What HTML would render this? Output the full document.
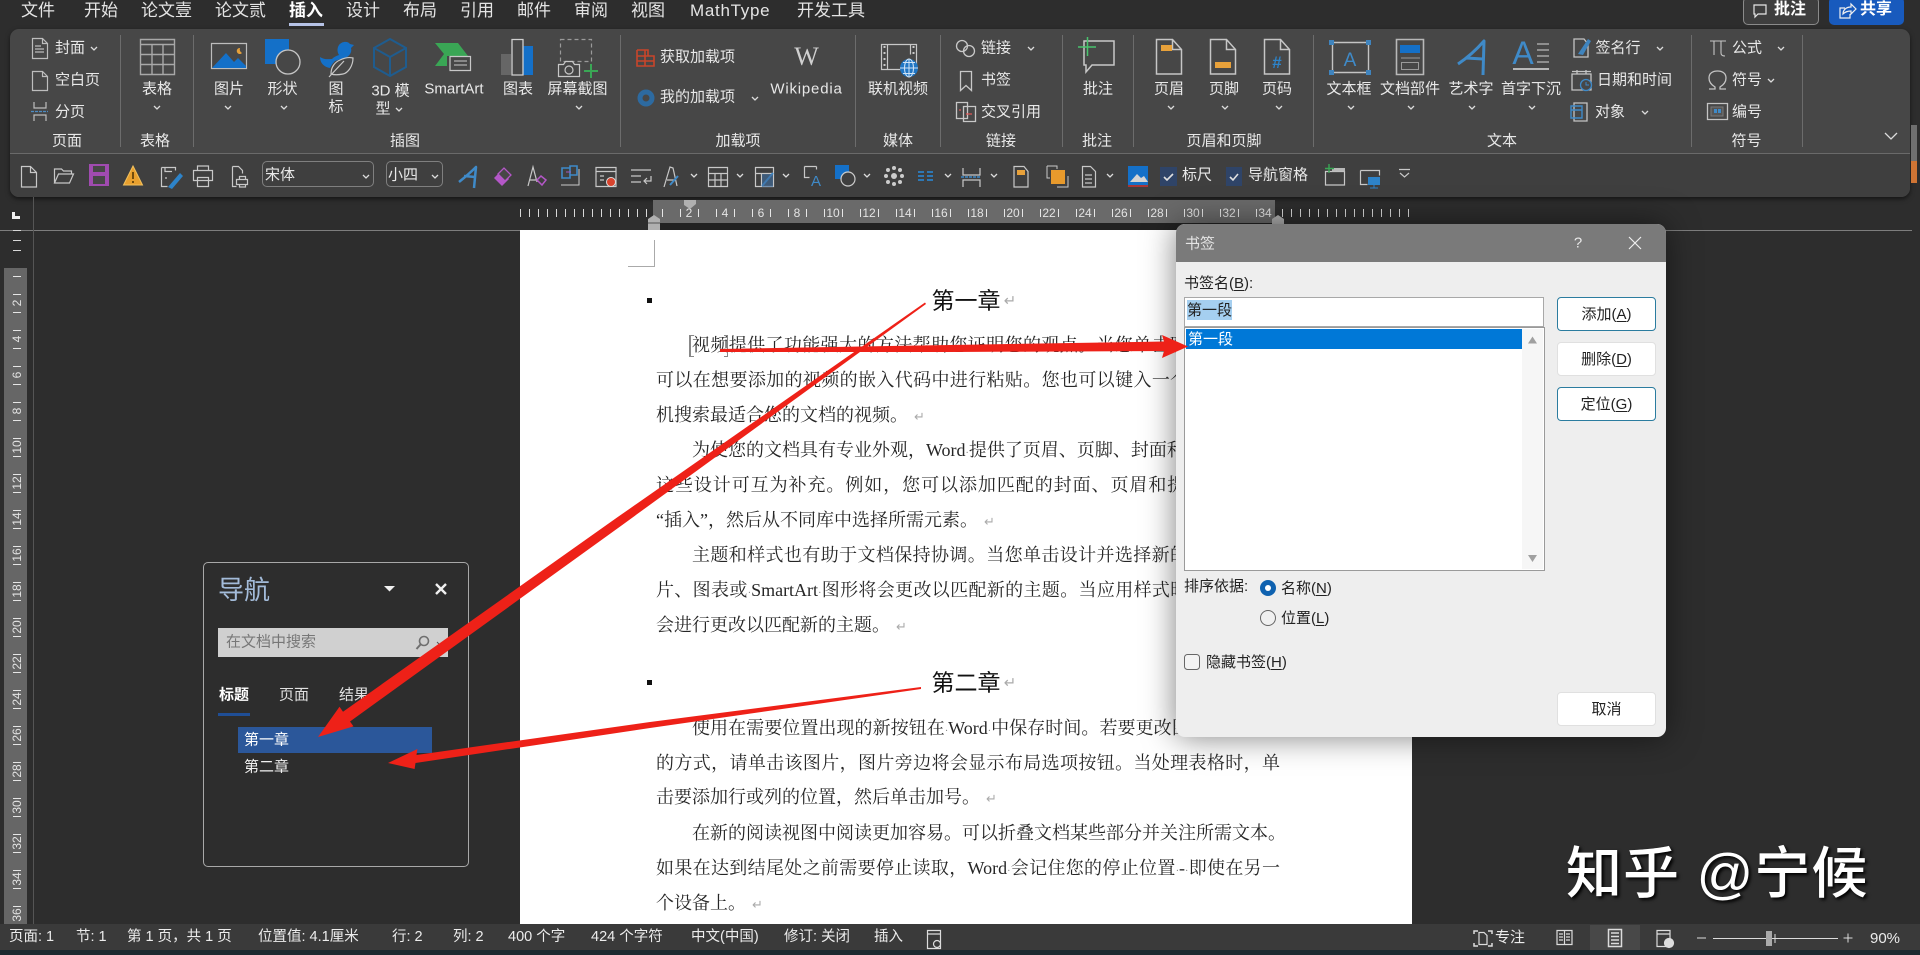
<!DOCTYPE html>
<html lang="zh-CN">
<head>
<meta charset="utf-8">
<title>书签</title>
<style>
html,body{margin:0;padding:0;width:1920px;height:955px;overflow:hidden;background:#2d2d2d}
body{position:relative;font-family:"Liberation Sans","Noto Sans CJK SC",sans-serif;color:#e8e8e8;font-size:15px}
div,span{box-sizing:border-box}
.a{position:absolute}
.c,.l,.tab,.s,.d{position:absolute;white-space:nowrap;line-height:1}
.c{transform:translate(-50%,-50%)}
.l{transform:translateY(-50%)}
.tab{top:2px;font-size:17px;color:#e4e4e4}
.s{top:930px;font-size:14.5px;color:#ececec}
svg{position:absolute;left:0;top:0}
.ln{position:absolute;left:656px;width:624px;height:24px;line-height:24px;font-family:"Liberation Serif","Noto Serif CJK SC",serif;font-size:18px;color:#262626;white-space:nowrap;text-align:justify;text-align-last:justify}
.ln.i{left:692px;width:588px}
.ln.e{text-align-last:left}
.ln b{font-weight:400;color:#888;font-size:10px}
.r{font-family:"DejaVu Sans",sans-serif;color:#aaa;font-size:13px;margin-left:6px}
.d{font-size:15px;color:#222}
.btn{position:absolute;left:1557px;width:99px;height:34px;background:#fff;border:1px solid #e0e0e0;border-radius:4px;text-align:center;line-height:34px;font-size:15px;color:#222}
.btn.p{border:1.5px solid #2b7c9f}
u{text-underline-offset:2px}
</style>
</head>
<body>
<!-- top tabs -->
<div class="tab" style="left:21px">文件</div>
<div class="tab" style="left:84px">开始</div>
<div class="tab" style="left:141px">论文壹</div>
<div class="tab" style="left:215px">论文贰</div>
<div class="tab" style="left:289px;font-weight:700;color:#fff">插入</div>
<div class="a" style="left:289px;top:23px;width:35px;height:3px;background:#b6c3e6"></div>
<div class="tab" style="left:346px">设计</div>
<div class="tab" style="left:403px">布局</div>
<div class="tab" style="left:460px">引用</div>
<div class="tab" style="left:517px">邮件</div>
<div class="tab" style="left:574px">审阅</div>
<div class="tab" style="left:631px">视图</div>
<div class="tab" style="left:690px;letter-spacing:.7px">MathType</div>
<div class="tab" style="left:797px">开发工具</div>

<div class="a" style="left:1743px;top:-3px;width:76px;height:28px;background:#3e3e3e;border:1px solid #8a8a8a;border-radius:5px"></div>
<div class="c" style="left:1790px;top:10px;font-size:16px;font-weight:700;color:#fff">批注</div>
<div class="a" style="left:1829px;top:-3px;width:75px;height:28px;background:#185abd;border-radius:5px"></div>
<div class="c" style="left:1876px;top:10px;font-size:16px;font-weight:700;color:#fff">共享</div>

<!-- ribbon -->
<div class="a" style="left:10px;top:29px;width:1900px;height:168px;background:#474747;border-radius:9px;box-shadow:0 2px 5px rgba(0,0,0,.55);overflow:hidden">
  <div class="a" style="left:0;top:124px;width:1900px;height:44px;background:#3f3f3f;border-top:1px solid #6a6a6a"></div>
</div>

<!-- rulers / page background -->
<div class="a" style="left:653px;top:200px;width:622px;height:23px;background:#6a6a6a"></div>
<div class="a" style="left:653px;top:223px;width:622px;height:7px;background:#222"></div>
<div class="a" style="left:4px;top:268px;width:23px;height:656px;background:#666"></div>
<div class="a" style="left:0;top:230px;width:1912px;height:1px;background:#7d7d7d"></div>
<div class="a" style="left:33px;top:197px;width:1px;height:727px;background:#555"></div>
<div class="a" style="left:520px;top:230px;width:892px;height:694px;background:#fff"></div>

<!-- document -->
<div class="a" style="left:647px;top:298px;width:5px;height:5px;background:#111"></div>
<div class="a" style="left:647px;top:680px;width:5px;height:5px;background:#111"></div>
<div class="c" style="left:966px;top:301px;font-size:23px;color:#111">第一章</div>
<div class="c" style="left:1010px;top:301px;font-size:15px;color:#aaa;font-family:'DejaVu Sans',sans-serif">↵</div>
<div class="c" style="left:966px;top:683px;font-size:23px;color:#111">第二章</div>
<div class="c" style="left:1010px;top:683px;font-size:15px;color:#aaa;font-family:'DejaVu Sans',sans-serif">↵</div>
<div class="a" style="left:628px;top:266px;width:27px;height:1px;background:#aaa"></div>
<div class="a" style="left:654px;top:240px;width:1px;height:27px;background:#aaa"></div>

<div class="ln i" style="top:333px">视频提供了功能强大的方法帮助您证明您的观点。当您单击联机视频时，</div>
<div class="ln" style="top:368px">可以在想要添加的视频的嵌入代码中进行粘贴。您也可以键入一个关键字以联</div>
<div class="ln e" style="top:403px">机搜索最适合您的文档的视频。<span class="r">↵</span></div>
<div class="ln i" style="top:438px">为使您的文档具有专业外观，Word<b>·</b>提供了页眉、页脚、封面和文本框设计，</div>
<div class="ln" style="top:473px">这些设计可互为补充。例如，您可以添加匹配的封面、页眉和提要栏。单击</div>
<div class="ln e" style="top:508px">“插入”，然后从不同库中选择所需元素。<span class="r">↵</span></div>
<div class="ln i" style="top:543px">主题和样式也有助于文档保持协调。当您单击设计并选择新的主题时，图</div>
<div class="ln" style="top:578px">片、图表或<b>·</b>SmartArt<b>·</b>图形将会更改以匹配新的主题。当应用样式时，您的标题</div>
<div class="ln e" style="top:613px">会进行更改以匹配新的主题。<span class="r">↵</span></div>
<div class="ln i" style="top:716px">使用在需要位置出现的新按钮在<b>·</b>Word<b>·</b>中保存时间。若要更改图片适应文档</div>
<div class="ln" style="top:751px">的方式，请单击该图片，图片旁边将会显示布局选项按钮。当处理表格时，单</div>
<div class="ln e" style="top:785px">击要添加行或列的位置，然后单击加号。<span class="r">↵</span></div>
<div class="ln i" style="top:821px">在新的阅读视图中阅读更加容易。可以折叠文档某些部分并关注所需文本。</div>
<div class="ln" style="top:856px">如果在达到结尾处之前需要停止读取，Word<b>·</b>会记住您的停止位置<b>·</b>-<b>·</b>即使在另一</div>
<div class="ln e" style="top:891px">个设备上。<span class="r">↵</span></div>
<div class="a" style="left:689px;top:335px;width:5px;height:22px;border:1px solid #888;border-left-width:2px;border-right:0"></div>
<div class="a" style="left:724px;top:335px;width:4px;height:22px;border:1px solid #888;border-left:0"></div>

<!-- ribbon icons, rulers -->
<svg width="1920" height="955" viewBox="0 0 1920 955" fill="none">
  <!-- group separators -->
  <path stroke="#6c6c6c" d="M120.500 35v112M193.500 35v112M620.500 35v112M855.500 35v112M940.500 35v112M1062.500 35v112M1133.500 35v112M1313.500 35v112M1691.500 35v112M1802.500 35v112"/>
  <!-- chevrons -->
  <path stroke="#dcdcdc" stroke-width="1.3" d="M91 47l3 3 3-3M154 106l3 3 3-3M225 106l3 3 3-3M281 106l3 3 3-3M396 108l3 3 3-3M576 106l3 3 3-3M752 97l3 3 3-3M1028 47l3 3 3-3M1168 106l3 3 3-3M1222 106l3 3 3-3M1276 106l3 3 3-3M1348 106l3 3 3-3M1408 106l3 3 3-3M1469 106l3 3 3-3M1529 106l3 3 3-3M1657 47l3 3 3-3M1642 111l3 3 3-3M1778 47l3 3 3-3M1768 79l3 3 3-3M363 175l3 3 3-3M432 175l3 3 3-3M691 174l3 3 3-3M737 174l3 3 3-3M783 174l3 3 3-3M864 174l3 3 3-3M945 174l3 3 3-3M991 174l3 3 3-3M1107 174l3 3 3-3"/>
  <path stroke="#dcdcdc" stroke-width="1.3" d="M1885 133l6 6 6-6"/>
  <!-- page group -->
  <g stroke="#bdbdbd" stroke-width="1.2">
    <path d="M32.500 38.500h10l5 5v15h-15zM42.500 38.500v5h5M35 46h6M35 49h9M35 52h9"/>
    <path d="M32.500 71.500h10l5 5v14h-15zM42.500 71.500v5h5"/>
    <path d="M34 102v6h12v-6M34 121v-6h12v6"/>
    <path stroke="#4d8cc4" stroke-dasharray="3 1" d="M31 111.500h17"/>
    <!-- table -->
    <path stroke="#a8a8a8" stroke-width="1.4" d="M140.500 39.500h34v35h-34zM140.500 44.500h34M140.500 54.500h34M140.500 64.500h34M152 44.500v30M163 44.500v30"/>
    <!-- picture -->
    <path d="M211.500 43.500h35v25h-35z"/>
  </g>
  <path fill="#1470c8" d="M212 68l14-15 8 9 4-4 8 8v2z"/>
  <path fill="#e6a13a" d="M240 48a3 3 0 1 0 2 5 4 4 0 0 1-2-5z"/>
  <!-- shapes -->
  <path fill="#1470c8" d="M265 39h24v25h-24z"/>
  <circle cx="288" cy="62" r="12" fill="#474747" stroke="#c6c6c6" stroke-width="1.3"/>
  <!-- icon duck + leaf -->
  <path fill="#1470c8" d="M320 57c5 3 8 2 12 2 2-2 4-3 7-4-2-3-2-7 0-10 3-4 9-4 11-1l4 1-3 3c1 4-1 7-4 9l-12 4c-3 3-4 5-5 7-6-1-10-5-10-11z"/>
  <path fill="#474747" stroke="#c8c8c8" stroke-width="1.2" d="M331 74c0-7 4-12 9-14 4-2 9-3 13-2 0 8-5 15-10 16-5 1-9 1-12 0zM329 77l15-16"/>
  <!-- 3D -->
  <path stroke="#1f5c8e" stroke-width="2" d="M390 39l16 9v19l-16 9-16-9V48zM374 48l16 9 16-9M390 57v19"/>
  <!-- smartart -->
  <path fill="#3aa655" d="M435 43h23l10 13h-21v10h-12l9-12z"/>
  <path fill="#474747" stroke="#c8c8c8" stroke-width="1.2" d="M450 56.500h20.500v14h-20.500z"/>
  <path stroke="#c8c8c8" d="M454 61h13M454 65h13"/>
  <!-- chart -->
  <path fill="#666" d="M501 54h10v21h-10z"/>
  <path fill="#1470c8" d="M523 46h10v29h-10z"/>
  <path stroke="#d0d0d0" stroke-width="1.3" d="M512 39.500h11v35.500h-11z"/>
  <!-- screenshot -->
  <path stroke="#9a9a9a" stroke-width="1.2" stroke-dasharray="4 3" d="M560.500 39.500h31v22h-31z"/>
  <path stroke="#c8c8c8" stroke-width="1.2" fill="#474747" d="M558.500 64.500h5l2-3h7l2 3h5v12h-21z"/>
  <circle cx="569" cy="70" r="4" stroke="#c8c8c8" stroke-width="1.2"/>
  <path stroke="#3aa655" stroke-width="2" d="M591 64v14M584 71h14"/>
  <!-- addins -->
  <path stroke="#c8452a" stroke-width="1.6" d="M637 50h11v6h6M637 56h17v10h-17zM637 50v6M645 50v16M637 61h17"/>
  <circle cx="646" cy="98" r="6" stroke="#2d6aa0" stroke-width="5"/>
  <!-- video -->
  <path stroke="#c8c8c8" stroke-width="1.2" d="M881.500 44.500h35v25h-35zM887.500 44.500v25M910.500 44.500v10"/>
  <path stroke="#c8c8c8" stroke-width="2" stroke-dasharray="2 4" d="M884.500 46v22M913.500 46v8"/>
  <circle cx="909" cy="68" r="9" fill="#2076c4"/>
  <path stroke="#cfe3f6" d="M900 68h18M909 59v18M903 62.500h12M903 73.500h12"/>
  <ellipse cx="909" cy="68" rx="4.500" ry="9" stroke="#cfe3f6"/>
  <!-- links -->
  <g stroke="#c8c8c8" stroke-width="1.3">
    <circle cx="962" cy="46" r="5.500"/><circle cx="969" cy="51" r="5.500"/>
    <path d="M960.500 71.500h11v19l-5.500-5-5.500 5z"/>
    <path d="M956.500 102.500h11v16h-11zM963.500 106.500h12v15h-12z"/>
    <path stroke="#d55" d="M966 114h6M959 110h2"/>
    <!-- comment -->
    <path stroke-width="1.5" d="M1084 41h30v24h-22l-6 7v-7h-2z"/>
  </g>
  <path stroke="#49c46e" stroke-width="1.5" d="M1087.500 37v19M1078 47h18"/>
  <!-- header/footer docs -->
  <g stroke="#c6c6c6" stroke-width="1.5">
    <path d="M1156.500 39.500h16l9 10v24.500h-25zM1172.500 39.500v10h9"/>
    <path d="M1210.500 39.500h16l9 10v24.500h-25zM1226.500 39.500v10h9"/>
    <path d="M1264.500 39.500h16l9 10v24.500h-25zM1280.500 39.500v10h9"/>
  </g>
  <path fill="#e8a13a" d="M1161 45h11v6h-11zM1215 62h16v6h-16z"/>
  <text x="1277" y="68" font-family="Liberation Sans" font-size="17" font-weight="700" fill="#2d83c9" text-anchor="middle">#</text>
  <!-- textbox -->
  <path stroke="#c4c4c4" stroke-width="1.4" d="M1332.500 42.500h36v30h-36z"/>
  <path fill="#3f84be" d="M1329 40h5v5h-5zM1366 40h5v5h-5zM1329 70h5v5h-5zM1366 70h5v5h-5z"/>
  <text x="1350" y="66" font-family="Liberation Sans" font-size="19" fill="#3f8ac8" text-anchor="middle">A</text>
  <!-- doc parts -->
  <path stroke="#b8b8b8" stroke-width="1.6" d="M1396.500 39.500h27v35h-27z"/>
  <path fill="#1470c8" d="M1400 45h20v8h-20z"/>
  <path stroke="#9a9a9a" d="M1401 58h19M1401.500 62.500h17v7h-17z"/>
  <!-- wordart -->
  <path stroke="#3f8ac8" stroke-width="3" stroke-linejoin="round" d="M1458 64c9-6 19-15 26-23l-1 34M1466 58l17 1"/>
  <!-- dropcap -->
  <text x="1523" y="64" font-family="Liberation Sans" font-size="32" fill="#3f8ac8" text-anchor="middle">A</text>
  <path stroke="#b8b8b8" stroke-width="1.3" d="M1537 44h12M1537 50h12M1537 56h12M1537 62h12"/>
  <path stroke="#b8b8b8" stroke-width="2" d="M1513 69h36"/>
  <!-- signature etc -->
  <g stroke="#c4c4c4" stroke-width="1.3">
    <path d="M1574 39h10l4 5v13h-14z"/>
    <path d="M1572 74h19v16h-19zM1572 71.500h19M1577 70v4M1586 70v4"/>
    <path d="M1574 103h13v18h-13z"/>
    <path stroke-width="1.1" d="M1726 41h-16M1714 41v14M1721 41v12c0 2 1 3 4 3"/>
    <path stroke-width="1.3" d="M1709 89h6v-2c-5-3-6-6-6-9 0-5 4-7 8.500-7s8.500 2 8.500 7c0 3-1 6-6 9v2h6"/>
    <path d="M1707.500 103.500h20v16h-20z"/>
  </g>
  <path fill="#3f84be" d="M1578 54l10-15 3 2-8 14z"/>
  <path fill="#555" stroke="#7a7a7a" d="M1711 107h12v9h-12z"/>
  <path fill="#3f8ac8" d="M1714 109h3v4h-3zM1718 109h3v4h-3z"/>
  <circle cx="1586" cy="85" r="5.500" fill="#474747" stroke="#3f8ac8" stroke-width="1.3"/>
  <path stroke="#3f8ac8" d="M1586 82v3h3"/>
  <path stroke="#3f8ac8" stroke-width="1.4" d="M1571 106h11v12h-11zM1571 110h11"/>

  <!-- toolbar icons -->
  <g stroke="#c8c8c8" stroke-width="1.2">
    <path d="M21.500 166.500h9l6 6v14.500h-15zM30.500 166.500v6h6"/>
    <path d="M54.500 183v-14h7l2 2h8v3M54.500 183l4-9h15l-4 9z"/>
    <path d="M161.500 167.500h14v3M161.500 167.500v19h6M165 167.500v4h7M165 178h2"/>
    <path d="M197.500 170v-4h11v4M193.500 170.500h19v10h-19zM197.500 177.500h11v9h-11z"/>
    <path d="M232.500 166.500h6l4 4v3M232.500 166.500v20h4M239.500 176.500h6v3h-6zM236.500 179.500h11v5h-11zM239.500 184.500h6v2.500h-6z"/>
    <path d="M596 167.500h20v19h-20zM596 171.500h20M600 176h4M600 180h4"/>
    <path d="M631 170h20M631 176h10M631 182h10M651 176v5h-7M647 178l-3 3 3 3"/>
    <path d="M664 187l6-20 3 1 4 18M667 180h8"/>
    <path d="M708.500 167.500h19v19h-19zM708.500 173.500h19M708.500 180h19M715 173.500v13M721 173.500v13"/>
    <path d="M755.500 167.500h18v19h-18zM755.500 173.500h18M761.500 173.500v13"/>
    <path d="M804.500 166.500h12M804.500 166.500v11h5M816.500 166.500v3"/>
    <path d="M1014 166.500h10l4 5v15.500h-14z"/>
    <path d="M1082.500 166.500h8l5 5v15.500h-13zM1085 175h7M1085 179h7M1085 183h7"/>
    <path d="M963 168v7h17v-7M963 187v-7h17v7"/>
    <path d="M1325.500 171.500h19v13.500h-19z"/>
    <path d="M1360.500 170.500h19v5M1360.500 170.500v14h7"/>
    <path d="M1399 169.500h11M1400 173l4.500 4 4.500-4"/>
  </g>
  <path fill="#b8b8b8" d="M1332 168h13v3.500h-13z"/>
  <path fill="#a04bb0" d="M89 164h20v22h-20z"/>
  <path fill="#474747" d="M93 166h12v6h-12zM93 176h12v8h-12z"/>
  <path fill="#e8a02e" stroke="#f2c15e" d="M133 166l9.500 19h-19z"/>
  <path stroke="#4a3000" stroke-width="1.5" d="M133 172v7M133 181v2"/>
  <path fill="#2d83c9" d="M168 187l12-14 3 3-11 13z"/>
  <path stroke="#3f8ac8" stroke-width="2.500" stroke-linejoin="round" d="M459 182c5-4 12-10 17-15l-2 21M464 176l11 1"/>
  <path fill="#b457c8" d="M494 178l8 8 7-7-8-8z"/>
  <path stroke="#b457c8" stroke-width="1.300" fill="#474747" d="M498 174l6-6 7 7-6 6z"/>
  <path stroke="#c8c8c8" stroke-width="1.2" d="M528 186l5-19 4 15M530 180h6"/>
  <path stroke="#b457c8" stroke-width="1.500" d="M537 180l4-4 5 4-4 5z"/>
  <path stroke="#3f8ac8" stroke-width="1.600" d="M562 168h8v10h-8zM570 166h7v9h-7z"/>
  <path stroke="#a05abf" d="M566 172h5"/>
  <path stroke="#c8c8c8" d="M561 185h18v-16"/>
  <circle cx="611" cy="182" r="4.500" fill="#d8432d" stroke="#ddd"/>
  <path stroke="#3f8ac8" stroke-width="2" d="M670 185l8-9"/>
  <path stroke="#3f8ac8" stroke-width="2" d="M762 186l11-13"/>
  <path fill="#3f6ea0" opacity=".6" d="M762 174h11v13h-11z"/>
  <text x="816" y="186" font-family="Liberation Sans" font-size="15" fill="#3f8ac8" text-anchor="middle">A</text>
  <path fill="#1470c8" d="M835 165h14v14h-14z"/>
  <circle cx="848" cy="179" r="7" fill="#3f3f3f" stroke="#ccc" stroke-width="1.200"/>
  <g fill="#ccc">
    <circle cx="894" cy="176" r="3"/><circle cx="894" cy="168" r="2"/><circle cx="894" cy="184" r="2"/><circle cx="886" cy="176" r="2"/><circle cx="902" cy="176" r="2"/><circle cx="888" cy="170" r="2"/><circle cx="900" cy="170" r="2"/><circle cx="888" cy="182" r="2"/><circle cx="900" cy="182" r="2"/>
  </g>
  <path stroke="#2e78b5" stroke-width="2" d="M918 172h6M918 176h6M918 180h6M927 172h6M927 176h6M927 180h6"/>
  <path stroke="#3f8ac8" stroke-width="1.500" stroke-dasharray="3 1" d="M961 177h20"/>
  <path fill="#e8a13a" d="M1017 170h8v5h-8z"/>
  <path stroke="#c8c8c8" d="M1047 166h10v3M1047 166v12h3M1068 176v11h-11"/>
  <path fill="#e89a2c" d="M1051 170h14v14h-14z"/>
  <path fill="#1470c8" d="M1128 166h20v19h-20z"/>
  <path fill="#d4d4d4" d="M1130 182l7-8 4 4 3-2 4 6z"/>
  <path stroke="#c33" stroke-width="1.500" d="M1128 186h20"/>
  <path fill="#2f4468" d="M1160 167h17v19h-17zM1226 167h16v19h-16z"/>
  <path stroke="#e0e0e0" stroke-width="1.600" d="M1164 177l3 3 6-6M1230 177l3 3 5-6"/>
  <path stroke="#3aa655" stroke-width="1.400" d="M1329 164v9M1325 168.500h9"/>
  <path fill="#2d83c9" d="M1368 177h12v8h-12z"/>
  <path stroke="#2d83c9" d="M1374 185v3M1370 188h8"/>

  <!-- comment/share top icons -->
  <path stroke="#e6e6e6" stroke-width="1.200" d="M1754 5h12v9h-8l-3 3v-3h-1z"/>
  <path stroke="#f0f0f0" stroke-width="1.200" d="M1845 8h-5v10h10v-4M1843 14c0-4 3-7 8-7V4l5 5-5 5v-3c-3 0-6 1-8 3z"/>

  <!-- horizontal ruler ticks -->
  <path stroke="#d8d8d8" stroke-dasharray="1 8" stroke-width="8" d="M520 213h133M1282 213h128"/>
  <path stroke="#e6e6e6" stroke-dasharray="1 17" stroke-width="8" d="M662 213h610"/>
  <g font-family="Liberation Sans" font-size="12" fill="#e4e4e4" text-anchor="middle">
    <text x="689" y="217">2</text><text x="725" y="217">4</text><text x="761" y="217">6</text><text x="797" y="217">8</text><text x="833" y="217">10</text><text x="869" y="217">12</text><text x="905" y="217">14</text><text x="941" y="217">16</text><text x="977" y="217">18</text><text x="1013" y="217">20</text><text x="1049" y="217">22</text><text x="1085" y="217">24</text><text x="1121" y="217">26</text><text x="1157" y="217">28</text><text x="1193" y="217">30</text><text x="1229" y="217">32</text><text x="1265" y="217">34</text>
  </g>
  <!-- indents -->
  <path fill="#b0b0b0" d="M684 200h12v4l-6 5-6-4z"/>
  <path fill="#b0b0b0" d="M648 230v-11l6-4 6 4v11z"/>
  <path stroke="#555" d="M648 223h12"/>
  <path fill="#b0b0b0" d="M1272 230v-11l6-4 6 4v11z"/>
  <!-- tab stop -->
  <path fill="#f0f0f0" d="M12 212h3v4h5v3h-8z"/>
  <!-- vertical ruler ticks -->
  <path stroke="#d8d8d8" stroke-dasharray="1 9" stroke-width="8" d="M17 230v30"/>
  <path stroke="#e6e6e6" stroke-dasharray="1 17" stroke-width="8" d="M17 276v648"/>
  <g font-family="Liberation Sans" font-size="12" fill="#e4e4e4" text-anchor="middle">
    <text transform="translate(21 303) rotate(-90)">2</text><text transform="translate(21 339) rotate(-90)">4</text><text transform="translate(21 375) rotate(-90)">6</text><text transform="translate(21 411) rotate(-90)">8</text><text transform="translate(21 447) rotate(-90)">10</text><text transform="translate(21 483) rotate(-90)">12</text><text transform="translate(21 519) rotate(-90)">14</text><text transform="translate(21 555) rotate(-90)">16</text><text transform="translate(21 591) rotate(-90)">18</text><text transform="translate(21 627) rotate(-90)">20</text><text transform="translate(21 663) rotate(-90)">22</text><text transform="translate(21 699) rotate(-90)">24</text><text transform="translate(21 735) rotate(-90)">26</text><text transform="translate(21 771) rotate(-90)">28</text><text transform="translate(21 807) rotate(-90)">30</text><text transform="translate(21 843) rotate(-90)">32</text><text transform="translate(21 879) rotate(-90)">34</text><text transform="translate(21 915) rotate(-90)">36</text>
  </g>
  <!-- scrollbar -->
  <path fill="#6f6f6f" d="M1911 125h6v36h-6z"/>
  <path fill="#cf7434" d="M1911 161h6v22h-6z"/>
</svg>

<!-- ribbon labels -->
<div class="l" style="left:55px;top:48px">封面</div>
<div class="l" style="left:55px;top:80px">空白页</div>
<div class="l" style="left:55px;top:112px">分页</div>
<div class="c" style="left:157px;top:89px">表格</div>
<div class="c" style="left:229px;top:89px">图片</div>
<div class="c" style="left:282.500px;top:89px">形状</div>
<div class="c" style="left:336px;top:89px">图</div>
<div class="c" style="left:336px;top:107px">标</div>
<div class="c" style="left:390.500px;top:91px">3D 模</div>
<div class="c" style="left:383px;top:109px">型</div>
<div class="c" style="left:454px;top:89px">SmartArt</div>
<div class="c" style="left:518px;top:89px">图表</div>
<div class="c" style="left:577.500px;top:89px">屏幕截图</div>
<div class="l" style="left:660px;top:57px">获取加载项</div>
<div class="l" style="left:660px;top:97px">我的加载项</div>
<div class="c" style="left:806.500px;top:57px;font-family:'Liberation Serif',serif;font-size:26px;color:#d0d0d0">W</div>
<div class="c" style="left:806.500px;top:89px;letter-spacing:.8px">Wikipedia</div>
<div class="c" style="left:898px;top:89px">联机视频</div>
<div class="l" style="left:981px;top:48px">链接</div>
<div class="l" style="left:981px;top:80px">书签</div>
<div class="l" style="left:981px;top:112px">交叉引用</div>
<div class="c" style="left:1098px;top:89px">批注</div>
<div class="c" style="left:1169px;top:89px">页眉</div>
<div class="c" style="left:1224px;top:89px">页脚</div>
<div class="c" style="left:1277px;top:89px">页码</div>
<div class="c" style="left:1349px;top:89px">文本框</div>
<div class="c" style="left:1410px;top:89px">文档部件</div>
<div class="c" style="left:1471px;top:89px">艺术字</div>
<div class="c" style="left:1531px;top:89px">首字下沉</div>
<div class="l" style="left:1595.500px;top:48px">签名行</div>
<div class="l" style="left:1597px;top:80px">日期和时间</div>
<div class="l" style="left:1595px;top:112px">对象</div>
<div class="l" style="left:1732px;top:48px">公式</div>
<div class="l" style="left:1732px;top:80px">符号</div>
<div class="l" style="left:1732px;top:112px">编号</div>
<div class="c" style="left:67px;top:141px">页面</div>
<div class="c" style="left:155px;top:141px">表格</div>
<div class="c" style="left:405px;top:141px">插图</div>
<div class="c" style="left:738px;top:141px">加载项</div>
<div class="c" style="left:898px;top:141px">媒体</div>
<div class="c" style="left:1001px;top:141px">链接</div>
<div class="c" style="left:1097px;top:141px">批注</div>
<div class="c" style="left:1224px;top:141px">页眉和页脚</div>
<div class="c" style="left:1502px;top:141px">文本</div>
<div class="c" style="left:1746.500px;top:141px">符号</div>
<!-- toolbar controls -->
<div class="a" style="left:262px;top:161px;width:112px;height:26px;border:1px solid #7f7f7f;border-radius:5px"></div>
<div class="l" style="left:265px;top:175px">宋体</div>
<div class="a" style="left:386px;top:161px;width:57px;height:26px;border:1px solid #7f7f7f;border-radius:5px"></div>
<div class="l" style="left:388px;top:175px">小四</div>
<div class="l" style="left:1182px;top:175px">标尺</div>
<div class="l" style="left:1248px;top:175px">导航窗格</div>

<!-- status bar -->
<div class="a" style="left:0;top:924px;width:1920px;height:26px;background:#3a3a3a"></div>
<div class="a" style="left:0;top:950px;width:1920px;height:5px;background:#1d2a30"></div>
<div class="a" style="left:1590px;top:925px;width:50px;height:25px;background:#484848"></div>
<div class="s" style="left:9px">页面: 1</div>
<div class="s" style="left:76px">节: 1</div>
<div class="s" style="left:127px">第 1 页，共 1 页</div>
<div class="s" style="left:258px">位置值: 4.1厘米</div>
<div class="s" style="left:392px">行: 2</div>
<div class="s" style="left:453px">列: 2</div>
<div class="s" style="left:508px">400 个字</div>
<div class="s" style="left:591px">424 个字符</div>
<div class="s" style="left:691px">中文(中国)</div>
<div class="s" style="left:784px">修订: 关闭</div>
<div class="s" style="left:874px">插入</div>
<div class="s" style="left:1495px;font-size:15px">专注</div>
<div class="s" style="left:1870px;font-size:15px;top:931px">90%</div>
<svg width="1920" height="955" viewBox="0 0 1920 955" fill="none">
  <g stroke="#dcdcdc" stroke-width="1.200">
    <path d="M927.500 930.500h13v18h-13zM927.500 934h13"/>
    <circle cx="937" cy="944" r="3.500" fill="#3a3a3a"/>
    <path stroke-width="1.500" d="M1474 934v-3h4M1474 943v3h4M1492 934v-3h-4M1492 943v3h-4"/>
    <path d="M1479 932.500h5l3 3v9h-8z"/>
    <path d="M1557 930.500h7.500v14h-7.500zM1564.500 930.500h7.500v14h-7.500zM1559 934h4M1559 937h4M1559 940h4M1566 934h4M1566 937h4M1566 940h4"/>
    <path stroke-width="1.500" d="M1608.500 929.500h13v17h-13zM1611 933h8M1611 936.500h8M1611 940h8M1611 943.500h8"/>
    <path d="M1657 930.500h13v16h-13zM1657 934h13"/>
    <circle cx="1669" cy="943" r="4.500" fill="#dcdcdc"/>
    <path stroke-width="1" d="M1697 938h9M1713 938.500h125M1843.500 938h9M1848 933.500v9"/>
    <path stroke-width="1" d="M1775 934v9"/>
  </g>
  <path fill="#aaa" d="M1766 931h6v15h-6z"/>
</svg>

<!-- nav panel -->
<div class="a" style="left:203px;top:562px;width:266px;height:305px;background:#2d2d2d;border:1px solid #a8a8a8;border-radius:5px"></div>
<div class="l" style="left:218px;top:590px;font-size:26px;color:#a3bbd9">导航</div>
<svg width="1920" height="955" viewBox="0 0 1920 955" fill="none">
  <path fill="#f0f0f0" d="M384 586h11l-5.500 5.500z"/>
  <path stroke="#f0f0f0" stroke-width="2.400" d="M436 584l10 10M446 584l-10 10"/>
</svg>
<div class="a" style="left:218px;top:628px;width:230px;height:29px;background:#d0d0d0"></div>
<div class="l" style="left:226px;top:642px;color:#777">在文档中搜索</div>
<svg width="1920" height="955" viewBox="0 0 1920 955" fill="none">
  <circle cx="424" cy="641" r="4.500" stroke="#6f6f6f" stroke-width="1.600"/>
  <path stroke="#6f6f6f" stroke-width="2" d="M420.500 644.500l-4 4.500"/>
  <path stroke="#555" d="M437 642l2 2"/>
</svg>
<div class="l" style="left:219px;top:695px;color:#fff;font-weight:700">标题</div>
<div class="l" style="left:279px;top:695px;color:#e0e0e0">页面</div>
<div class="l" style="left:339px;top:695px;color:#e0e0e0">结果</div>
<div class="a" style="left:218px;top:713px;width:32px;height:3px;background:#1f4e96"></div>
<div class="a" style="left:238px;top:727px;width:194px;height:26px;background:#2b579a"></div>
<div class="l" style="left:244px;top:740px;color:#fff">第一章</div>
<div class="l" style="left:244px;top:767px;color:#f0f0f0">第二章</div>

<!-- dialog -->
<div class="a" style="left:1176px;top:224px;width:490px;height:513px;background:#eeeeee;border-radius:9px;box-shadow:0 0 32px rgba(0,0,0,.5);overflow:hidden">
  <div class="a" style="left:0;top:0;width:490px;height:38px;background:#7a7a7a"></div>
</div>
<div class="l" style="left:1185px;top:244px;color:#e4e4e4">书签</div>
<div class="c" style="left:1578px;top:243px;color:#e8e8e8">?</div>
<svg width="1920" height="955" viewBox="0 0 1920 955" fill="none">
  <path stroke="#efefef" stroke-width="1.200" d="M1629 237l12 12M1641 237l-12 12"/>
</svg>
<div class="d" style="left:1184px;top:276px">书签名(<u>B</u>):</div>
<div class="a" style="left:1184px;top:297px;width:360px;height:30px;background:#fff;border:1px solid #a8a8a8"></div>
<div class="a" style="left:1187px;top:300px;width:45px;height:20px;background:#a5cff0"></div>
<div class="d" style="left:1187px;top:303px">第一段</div>
<div class="a" style="left:1184px;top:327px;width:361px;height:244px;background:#fff;border:1.500px solid #9a9a9a"></div>
<div class="a" style="left:1522px;top:329px;width:21px;height:240px;background:#f6f6f6"></div>
<div class="a" style="left:1186px;top:329px;width:336px;height:20px;background:#0078d7"></div>
<div class="d" style="left:1188px;top:332px;color:#fff">第一段</div>
<svg width="1920" height="955" viewBox="0 0 1920 955" fill="none">
  <path fill="#a0a0a0" d="M1528 343.500h9l-4.500-7zM1528 555h9l-4.500 7z"/>
  <circle cx="1268" cy="588" r="8" fill="#0f62b0"/>
  <circle cx="1268" cy="588" r="3" fill="#fff"/>
  <circle cx="1268" cy="618" r="7.500" fill="#f0f0f0" stroke="#666"/>
  <rect x="1184.500" y="654.500" width="15" height="15" rx="3" fill="#f3f3f3" stroke="#666"/>
</svg>
<div class="d" style="left:1184px;top:579px">排序依据:</div>
<div class="d" style="left:1281px;top:581px">名称(<u>N</u>)</div>
<div class="d" style="left:1281px;top:611px">位置(<u>L</u>)</div>
<div class="d" style="left:1206px;top:655px">隐藏书签(<u>H</u>)</div>
<div class="btn p" style="top:297px">添加(<u>A</u>)</div>
<div class="btn" style="top:342px">删除(<u>D</u>)</div>
<div class="btn p" style="top:387px">定位(<u>G</u>)</div>
<div class="btn" style="top:692px">取消</div>

<!-- watermark -->
<div class="l" style="left:1566px;top:874px;font-size:56px;color:#fff;text-shadow:2px 2px 3px #000;letter-spacing:1px;font-weight:500;font-family:'Liberation Sans','Noto Sans CJK SC',sans-serif">知乎 @宁候</div>

<!-- red arrows -->
<svg width="1920" height="955" viewBox="0 0 1920 955">
  <path fill="#ee2118" d="M925 302.500L617.400 517.300L343 711.700L339.500 706.800L318 737L353.500 726.400L350 721.500L622.600 524.700L926 304z"/>
  <path fill="#ee2118" d="M921 687L650 722L416.500 755L417.400 749L388 763L414.600 769L415.500 763L650 728L921 689z"/>
  <path fill="#ee2118" d="M720 349L950 345L1164 341.500L1162 335L1188 346.500L1162 358L1164 351L950 352L720 352z"/>
</svg>
</body>
</html>
